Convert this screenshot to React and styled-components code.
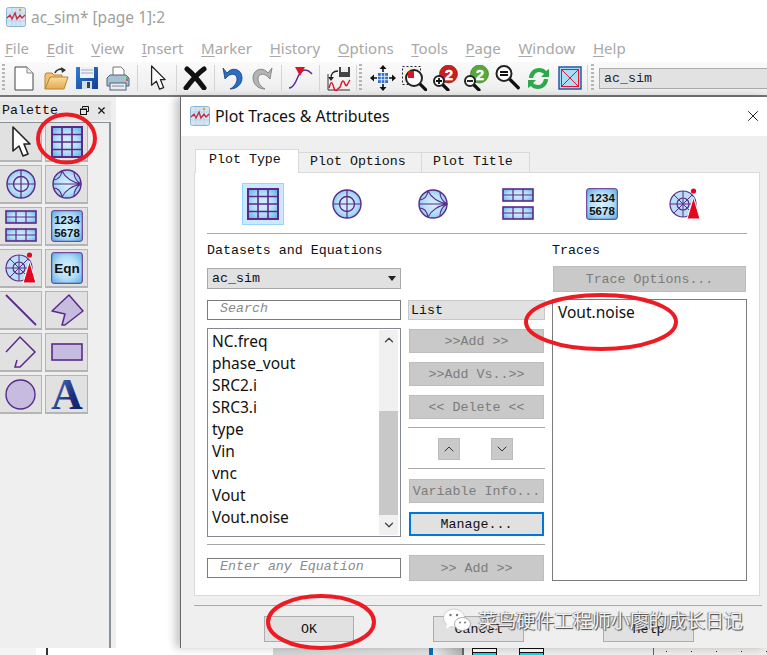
import React from 'react';
import styled, { createGlobalStyle } from 'styled-components';
import { ChevronUp, ChevronDown, X } from 'lucide-react';

const MONO = '"Liberation Mono", "DejaVu Sans Mono", monospace';
const SANS = '"Noto Sans", "Open Sans", sans-serif';
const PURPLE = '#5a2a8a';

const GlobalStyle = createGlobalStyle`
  html, body { margin: 0; padding: 0; background: #fff; }
  * { box-sizing: border-box; }
`;

const Page = styled.div`
  position: relative;
  width: 767px;
  height: 655px;
  overflow: hidden;
  display: flex;
  flex-direction: column;
  background: #fff;
  font-family: ${SANS};
`;

const TitleBar = styled.div`
  height: 40px;
  display: flex;
  align-items: center;
  gap: 5px;
  padding: 0 0 6px 6px;
  font-size: 15.5px;
  color: #a0a0a0;
`;

const MenuBar = styled.div`
  height: 22px;
  display: flex;
  align-items: center;
  gap: 17.7px;
  padding: 0 0 6px 5px;
  font-size: 15px;
  color: #a8a8a8;
  u { text-underline-offset: 2px; }
`;

const Toolbar = styled.div`
  height: 35px;
  display: flex;
  align-items: center;
  background: linear-gradient(#fafafa, #ececec);
  border-bottom: 2px solid #777;
  padding-bottom: 1px;
`;

const Slot = styled.div`
  display: flex;
  align-items: center;
  justify-content: center;
  flex: none;
  width: ${p => p.$w}px;
  margin-left: ${p => p.$ml}px;
`;

const Mirrored = styled.span`
  display: flex;
  transform: scaleX(-1);
`;

const ToolSep = styled.div`
  flex: none;
  width: 1px;
  height: 26px;
  background: #d4d4d4;
  margin-left: ${p => p.$ml}px;
`;

const Grip = styled.div`
  flex: none;
  width: 3px;
  height: 28px;
  margin-left: ${p => p.$ml}px;
  background: repeating-linear-gradient(#b5b5b5 0 2px, transparent 2px 4px);
`;

const ToolCombo = styled.div`
  flex: 1;
  height: 21px;
  margin-left: 5px;
  border: 1px solid #aaa;
  border-right: 0;
  background: #e2e2e2;
  font: 13.3px/20px ${MONO};
  color: #222;
  padding-left: 4px;
`;

const Workspace = styled.div`
  flex: 1;
  display: flex;
  min-height: 0;
`;

const Palette = styled.div`
  flex: none;
  width: 116px;
  margin-right: 64px;
  padding-top: 4px;
  background: #efefef;
  display: flex;
  flex-direction: column;
`;

const PaletteHead = styled.div`
  height: 19px;
  width: 111px;
  display: flex;
  align-items: center;
  background: #e6e6e6;
  padding-left: 2px;
  font: 13.3px ${MONO};
  color: #111;
  span { flex: 1; }
`;

const PaletteBody = styled.div`
  flex: 1;
  width: 111px;
  margin-top: 2px;
  border-top: 1px solid #8a9298;
  border-right: 2px solid #8a9298;
  display: grid;
  grid-template-columns: 42px 43px;
  grid-auto-rows: 39px;
  align-content: start;
  gap: 3px;
`;

const PaletteBtn = styled.div`
  display: flex;
  align-items: center;
  justify-content: center;
  background: #e1e1e1;
  border-style: solid;
  border-color: #b4b4b4;
  border-width: ${p => (p.$top ? '0 1px 2px 1px' : '1px 1px 2px 1px')};
  &:nth-child(odd) { border-left: 0; }
`;

const PaletteClose = styled(X)`
  margin: 0 4px 0 7px;
`;

const Dialog = styled.div`
  flex: 1;
  display: flex;
  flex-direction: column;
  min-width: 0;
  border-left: 1px solid #666;
  box-shadow: -5px 0 8px rgba(0, 0, 0, 0.22);
  background: #efefef;
  position: relative;
`;

const DialogTitle = styled.div`
  height: 39px;
  flex: none;
  display: flex;
  align-items: center;
  gap: 5px;
  padding: 0 5px 2px 9px;
  background: #fff;
  font-size: 15.9px;
  color: #111;
  span { flex: 1; }
`;

const Tabs = styled.div`
  display: flex;
  align-items: flex-end;
  margin: 13px 0 0 14px;
  height: 23px;
`;

const Tab = styled.div`
  height: ${p => (p.$active ? 24 : 20)}px;
  width: ${p => p.$w}px;
  margin-bottom: ${p => (p.$active ? -1 : 0)}px;
  padding-left: ${p => (p.$active ? 13 : 11)}px;
  background: ${p => (p.$active ? '#fff' : '#f0f0f0')};
  border: 1px solid #d9d9d9;
  border-left-width: ${p => (p.$active ? 1 : 0)}px;
  border-bottom: 0;
  font: 13.3px/${p => (p.$active ? 20 : 18)}px ${MONO};
  color: #111;
  position: relative;
  z-index: ${p => (p.$active ? 1 : 0)};
`;

const Panel = styled.div`
  width: 566px;
  height: 424px;
  margin-left: 13px;
  background: #fff;
  border: 1px solid #d9d9d9;
  padding: 0 12px;
`;

const PlotRow = styled.div`
  height: 61px;
  display: flex;
  align-items: center;
  border-bottom: 1px solid #a8a8a8;
  padding: 2px 0 0 35px;
`;

const PlotSlot = styled.div`
  flex: none;
  width: 42px;
  height: 42px;
  margin-right: ${p => p.$mr}px;
  display: flex;
  align-items: center;
  justify-content: center;
  border: 1px solid ${p => (p.$selected ? '#99d1ff' : 'transparent')};
  background: ${p => (p.$selected ? '#cce8ff' : 'transparent')};
`;

const PanelBody = styled.div`
  display: flex;
  gap: 7px;
`;

const LeftBlock = styled.div`
  width: 338px;
  flex: none;
`;

const RightBlock = styled.div`
  width: 195px;
  flex: none;
`;

const Label = styled.div`
  height: 15px;
  margin-top: 10px;
  font: 13.3px/13px ${MONO};
  color: #111;
`;

const SelectBox = styled.div`
  width: 194px;
  height: 21px;
  margin-top: 9px;
  display: flex;
  align-items: center;
  justify-content: space-between;
  padding: 0 4px;
  background: #e1e1e1;
  border: 1px solid #a8a8a8;
  font: 13.3px ${MONO};
  color: #111;
  i {
    width: 0;
    height: 0;
    border: 4px solid transparent;
    border-top: 5px solid #222;
    border-bottom: 0;
  }
`;

const Columns = styled.div`
  display: flex;
  gap: 7px;
  margin-top: 11px;
`;

const LeftCol = styled.div`
  width: 194px;
  flex: none;
  display: flex;
  flex-direction: column;
  gap: 8px;
`;

const MidCol = styled.div`
  width: 137px;
  flex: none;
  display: flex;
  flex-direction: column;
`;

const InputBox = styled.div`
  height: 20px;
  border: 1px solid #7a7a7a;
  background: #fff;
  padding-left: ${p => p.$pad}px;
  font: italic 13.3px/16px ${MONO};
  color: #8a8a8a;
`;

const ListBox = styled.div`
  height: 209px;
  display: flex;
  justify-content: space-between;
  border: 1px solid #828790;
  background: #fff;
  padding-right: 2px;
`;

const ListItems = styled.div`
  padding: 1px 0 0 4px;
`;

const ListItem = styled.div`
  height: 22px;
  font-size: 15.5px;
  line-height: 22px;
  color: #111;
`;

const ScrollBar = styled.div`
  width: 19px;
  margin: 1px 0;
  background: #f0f0f0;
  display: flex;
  flex-direction: column;
  color: #444;
  span {
    height: 20px;
    display: flex;
    align-items: center;
    justify-content: center;
    flex: none;
  }
  em { flex: 1; }
  b { height: 104px; flex: none; background: #c8c8c8; }
`;

const ListHead = styled.div`
  height: 20px;
  background: #e1e1e1;
  border: 1px solid #c8c8c8;
  padding-left: 2px;
  font: 13.3px/19px ${MONO};
  color: #111;
`;

const Button = styled.div`
  flex: none;
  height: ${p => p.$h || 24}px;
  width: ${p => p.$w || 135}px;
  margin: ${p => p.$m || '0 1px'};
  display: flex;
  align-items: center;
  justify-content: center;
  background: ${p => (p.$off ? '#c9c9c9' : '#e1e1e1')};
  border: ${p => (p.$focus ? '2px solid #0078d7' : `1px solid ${p.$off ? '#bdbdbd' : '#adadad'}`)};
  font: 13.3px ${MONO};
  color: ${p => (p.$off ? '#7c7c7c' : '#111')};
  white-space: pre;
`;

const Rule = styled.div`
  height: 1px;
  background: #a8a8a8;
  margin: ${p => p.$m};
`;

const ArrowRow = styled.div`
  display: flex;
  gap: 31px;
  padding-left: 30px;
`;

const EquationRow = styled.div`
  display: flex;
  align-items: center;
  gap: 7px;
  margin-top: 10px;
`;

const EquationCell = styled.div`
  width: 194px;
  flex: none;
`;

const TracesList = styled.div`
  height: 282px;
  margin-top: 7px;
  border: 1px solid #7a7a7a;
  background: #fff;
  padding-left: 5px;
  font-size: 15.5px;
  line-height: 24px;
  color: #111;
`;

const Footer = styled.div`
  margin: 9px 5px 0 13px;
  border-top: 1px solid #a8a8a8;
  padding: 10px 0 0 70px;
  display: flex;
  gap: 79px;
`;

const BottomStrip = styled.div`
  height: 7px;
  flex: none;
  display: flex;
  background: #fff;
`;

const StripPiece = styled.div`
  flex: none;
  width: ${p => p.$w}px;
  margin-left: ${p => p.$ml || 0}px;
  background: ${p => p.$bg};
`;

const StripDock = styled.div`
  flex: none;
  width: 191px;
  display: flex;
  background: #eee;
  border-left: 2px solid #666;
`;

const StripGlyph = styled.div`
  flex: none;
  width: 25px;
  margin-left: ${p => p.$ml}px;
  border: 1px solid #111;
  border-bottom: 0;
  background: linear-gradient(#fff 0 3px, #111 3px 4px, #18d8e0 4px);
`;

const StripEnd = styled.div`
  flex: 1;
  border-left: 1px solid #666;
  background-color: #f0eceb;
  background-image: radial-gradient(#222 0.6px, transparent 0.8px);
  background-size: 25px 7px;
`;

const Overlay = styled.svg`
  position: absolute;
  left: 0;
  top: 0;
  pointer-events: none;
`;

const Watermark = styled.div`
  position: absolute;
  right: 24px;
  top: 607px;
  display: flex;
  align-items: center;
  gap: 8px;
  font: 18.9px/26px "Noto Sans CJK SC", sans-serif;
  color: rgba(255, 255, 255, 0.92);
  text-shadow: 1px 1px 1px #444, -1px 0 1px #777;
  white-space: nowrap;
`;

const blueFill = 'url(#blueGlow)';

const Defs = () => (
  <defs>
    <radialGradient id="blueGlow" cx="50%" cy="50%" r="65%">
      <stop offset="0" stopColor="#d8f0fd" />
      <stop offset="0.55" stopColor="#b4def7" />
      <stop offset="1" stopColor="#62b4e8" />
    </radialGradient>
    <linearGradient id="letterBlue" x1="0" y1="0" x2="1" y2="1">
      <stop offset="0" stopColor="#5d86c4" />
      <stop offset="0.6" stopColor="#1b2f7e" />
      <stop offset="1" stopColor="#0d1a5c" />
    </linearGradient>
    <linearGradient id="folderTan" x1="0" y1="0" x2="0" y2="1">
      <stop offset="0" stopColor="#fbdc9c" />
      <stop offset="1" stopColor="#e6a94f" />
    </linearGradient>
    <linearGradient id="floppyBlue" x1="0" y1="0" x2="1" y2="1">
      <stop offset="0" stopColor="#2f7fd0" />
      <stop offset="1" stopColor="#123f92" />
    </linearGradient>
  </defs>
);

const AppIcon = ({ size = 20 }) => (
  <svg width={size} height={size} viewBox="0 0 20 20">
    <rect x="0.5" y="0.5" width="19" height="19" rx="2" fill="#d4e6f5" stroke="#8fb4d2" />
    <path d="M1 6h18M1 10h18M1 14h18M6 1v18M10 1v18M14 1v18" stroke="#a9cbe6" strokeWidth="0.6" />
    <path d="M1 11l3-3 2 4 3-6 2 6 3-4 2 3 3-3" fill="none" stroke="#c8283a" strokeWidth="1.3" />
    <circle cx="14" cy="3" r="1.3" fill="#f0a020" />
  </svg>
);

const GridIcon = () => (
  <svg width="32" height="32" viewBox="0 0 32 32">
    <rect x="1" y="1" width="30" height="30" fill={blueFill} stroke={PURPLE} strokeWidth="2" />
    <path d="M11 1v30M21 1v30M1 8.5h30M1 16h30M1 23.5h30" stroke={PURPLE} strokeWidth="1.6" />
  </svg>
);

const PolarIcon = () => (
  <svg width="30" height="30" viewBox="0 0 30 30">
    <circle cx="15" cy="15" r="14" fill={blueFill} stroke={PURPLE} strokeWidth="1.4" />
    <circle cx="15" cy="15" r="7.5" fill="#cfeafb" stroke={PURPLE} strokeWidth="1.4" />
    <path d="M1 15h28M15 1v28" stroke={PURPLE} strokeWidth="1.2" />
  </svg>
);

const SmithIcon = () => (
  <svg width="30" height="30" viewBox="0 0 30 30">
    <circle cx="15" cy="15" r="14" fill={blueFill} stroke={PURPLE} strokeWidth="1.4" />
    <path d="M1 15h28M10 2C13 8 20 13 29 15C20 17 13 22 10 28M22 3C22 8 24 12 29 15C24 18 22 22 22 27M1 11C6 11 9 8 10 2M1 19C6 19 9 22 10 28" fill="none" stroke={PURPLE} strokeWidth="1.1" />
  </svg>
);

const StackIcon = () => (
  <svg width="32" height="32" viewBox="0 0 32 32">
    {[1, 19].map(y => (
      <g key={y}>
        <rect x="1" y={y} width="30" height="12" fill={blueFill} stroke={PURPLE} strokeWidth="1.6" />
        <path d={`M11 ${y}v12M21 ${y}v12M1 ${y + 6}h30`} stroke={PURPLE} strokeWidth="1.2" />
      </g>
    ))}
  </svg>
);

const NumbersIcon = () => (
  <svg width="32" height="32" viewBox="0 0 32 32">
    <rect x="0.7" y="0.7" width="30.6" height="30.6" rx="2" fill={blueFill} stroke={PURPLE} strokeWidth="1" />
    <text x="16" y="14" textAnchor="middle" fontFamily="Liberation Sans" fontWeight="700" fontSize="11.5" fill="#111">1234</text>
    <text x="16" y="27" textAnchor="middle" fontFamily="Liberation Sans" fontWeight="700" fontSize="11.5" fill="#111">5678</text>
  </svg>
);

const AntennaIcon = () => (
  <svg width="32" height="34" viewBox="0 0 32 34">
    <circle cx="14" cy="17" r="13" fill="#b9dff6" stroke={PURPLE} strokeWidth="1.2" />
    <circle cx="14" cy="17" r="6" fill="none" stroke={PURPLE} strokeWidth="1.2" />
    <path d="M1 17h26M14 4v26M5 8l18 18M23 8L5 26" stroke={PURPLE} strokeWidth="1" />
    <path d="M18 32L24.5 10 31 32z" fill="#e3061e" stroke="#fff" strokeWidth="1" />
    <circle cx="24.5" cy="4" r="2.6" fill="#e3061e" />
  </svg>
);

const EqnIcon = () => (
  <svg width="32" height="32" viewBox="0 0 32 32">
    <rect x="0.7" y="0.7" width="30.6" height="30.6" rx="2" fill={blueFill} stroke={PURPLE} strokeWidth="1" />
    <text x="16" y="21" textAnchor="middle" fontFamily="Liberation Sans" fontWeight="700" fontSize="13.5" fill="#111">Eqn</text>
  </svg>
);

const LineIcon = () => (
  <svg width="34" height="34" viewBox="0 0 34 34">
    <path d="M2 2l30 30" stroke={PURPLE} strokeWidth="1.8" />
  </svg>
);

const PolygonIcon = () => (
  <svg width="34" height="34" viewBox="0 0 34 34">
    <path d="M2 18L19 2l14 16-18 14h-3l3-11z" fill="#c5bce0" stroke={PURPLE} strokeWidth="1.5" strokeLinejoin="round" />
  </svg>
);

const PolylineIcon = () => (
  <svg width="32" height="34" viewBox="0 0 32 34">
    <path d="M1 17L15 2l15 15-15 15H10l2-7" fill="none" stroke={PURPLE} strokeWidth="1.5" />
  </svg>
);

const RectIcon = () => (
  <svg width="32" height="18" viewBox="0 0 32 18">
    <rect x="1" y="1" width="30" height="16" fill="#c5bce0" stroke={PURPLE} strokeWidth="1.6" />
  </svg>
);

const CircleIcon = () => (
  <svg width="31" height="31" viewBox="0 0 31 31">
    <circle cx="15.5" cy="15.5" r="14.5" fill="#c5bce0" stroke={PURPLE} strokeWidth="1.4" />
  </svg>
);

const LetterIcon = () => (
  <svg width="36" height="36" viewBox="0 0 36 36">
    <text x="18" y="33" textAnchor="middle" fontFamily="Liberation Serif" fontWeight="700" fontSize="44" fill="url(#letterBlue)">A</text>
  </svg>
);

const CursorIcon = ({ w = 20, h = 32 }) => (
  <svg width={w} height={h} viewBox="0 0 20 32">
    <path d="M2 1v24l6-5 4 10 5-2-4-10h6z" fill="#fff" stroke="#222" strokeWidth="1.6" strokeLinejoin="round" />
  </svg>
);

const NewDoc = () => (
  <svg width="20" height="25" viewBox="0 0 20 25">
    <path d="M1 1h12l6 6v17H1z" fill="#fff" stroke="#444" />
    <path d="M13 1v6h6" fill="#eee" stroke="#888" />
  </svg>
);

const OpenFolder = () => (
  <svg width="25" height="25" viewBox="0 0 25 25">
    <path d="M1 23V9l1-2h6l2 2h8v3H6z" fill="#f3c374" stroke="#b98436" />
    <path d="M1 23l5-12h18l-4 12z" fill="url(#folderTan)" stroke="#b98436" />
    <path d="M11 7c1-3 5-5 8-3" fill="none" stroke="#333" strokeWidth="1.6" />
    <path d="M17 1l5 3-4 3z" fill="#333" />
  </svg>
);

const SaveIcon = () => (
  <svg width="24" height="24" viewBox="0 0 24 24">
    <path d="M1 2a1 1 0 011-1h20a1 1 0 011 1v21H1z" fill="url(#floppyBlue)" />
    <rect x="5" y="1" width="14" height="11" fill="#eef3f8" />
    <path d="M6 4h12M6 7h12" stroke="#9ab" />
    <rect x="7" y="15" width="10" height="8" fill="#d7dde4" />
    <rect x="12" y="16" width="3" height="6" fill="#345" />
  </svg>
);

const PrinterIcon = () => (
  <svg width="24" height="25" viewBox="0 0 24 25">
    <path d="M7 1h8l3 3v8H7z" fill="#fff" stroke="#777" />
    <path d="M1 12l3-3h16l3 3v8H1z" fill="#a9bfd2" stroke="#4f6478" />
    <rect x="4" y="17" width="16" height="7" fill="#e7edf2" stroke="#4f6478" />
    <path d="M20 12h2" stroke="#2c2" strokeWidth="1.5" />
    <path d="M20 14h2" stroke="#e33" strokeWidth="1.5" />
    <path d="M6 20h12" stroke="#888" />
  </svg>
);

const BlackCross = () => (
  <svg width="24" height="24" viewBox="0 0 24 24">
    <path d="M4 3c6 5 11 11 17 19M21 3C14 8 9 14 3 22" stroke="#111" strokeWidth="5" strokeLinecap="round" fill="none" />
  </svg>
);

const UndoIcon = ({ color = '#2a6fc4', edge = '#0d3a8a' }) => (
  <svg width="21" height="25" viewBox="0 0 21 25">
    <path d="M1 2l2 11 3-3c4-3 9-2 9 3 0 4-3 8-7 10 7 0 12-5 12-11C20 4 12 1 7 5L5 7z" fill={color} stroke={edge} strokeWidth="0.8" strokeLinejoin="round" />
  </svg>
);

const TraceIcon = () => (
  <svg width="25" height="24" viewBox="0 0 25 24">
    <path d="M1 22c4 0 6-4 8-9s4-9 8-9 5 2 7 4" fill="none" stroke="#5a2a9a" strokeWidth="1.5" />
    <path d="M7 1h10l-5 9z" fill="#dc1428" />
  </svg>
);

const ExportIcon = () => (
  <svg width="24" height="25" viewBox="0 0 24 25">
    <rect x="12" y="1" width="11" height="10" fill="#444" />
    <rect x="14" y="1" width="7" height="5" fill="#eee" />
    <path d="M11 5C6 5 4 8 4 12" fill="none" stroke="#222" strokeWidth="1.3" />
    <path d="M1 11h6l-3 4z" fill="#222" />
    <path d="M1 8v16h22" fill="none" stroke="#333" />
    <path d="M2 22c2-7 3-7 5 0s3 0 5 0 2-7 4-7 2 7 4 4 2-4 3-5" fill="none" stroke="#dc1428" strokeWidth="1.4" />
  </svg>
);

const MoveIcon = () => (
  <svg width="26" height="26" viewBox="0 0 26 26">
    <rect x="8" y="8" width="10" height="10" fill="#2f74cc" />
    <path d="M11.3 8v10M14.7 8v10M8 11.3h10M8 14.7h10" stroke="#fff" strokeWidth="0.8" />
    <path d="M13 3v4M13 19v4M3 13h4M19 13h4" stroke="#111" strokeWidth="1.6" />
    <path d="M13 0l-3.5 4h7zM13 26l-3.5-4h7zM0 13l4-3.5v7zM26 13l-4-3.5v7z" fill="#111" />
  </svg>
);

const Lens = ({ cx, cy, r, reach = 7 }) => (
  <>
    <path d={`M${cx + r * 0.7} ${cy + r * 0.7}l${reach} ${reach}`} stroke="#111" strokeWidth="3.2" strokeLinecap="round" />
    <circle cx={cx} cy={cy} r={r} fill="#fff" stroke="#222" strokeWidth="2" />
  </>
);

const ZoomAreaIcon = () => (
  <svg width="25" height="25" viewBox="0 0 25 25">
    <rect x="0.5" y="0.5" width="18" height="18" fill="#f3f3d8" stroke="#225" strokeDasharray="2 2" />
    <Lens cx={12} cy={12} r={8} />
    <path d="M12 12V5H6v7z" fill="#dc1428" />
  </svg>
);

const ZoomTwoIcon = ({ mark, color, edge }) => (
  <svg width="25" height="26" viewBox="0 0 25 26">
    <circle cx="15.5" cy="9" r="9" fill={color} stroke={edge} strokeWidth="0.6" />
    <text x="16" y="14.5" textAnchor="middle" fontFamily="Liberation Sans" fontWeight="700" fontSize="15" fill="#fff" stroke="#fff" strokeWidth="0.4">2</text>
    <Lens cx={6} cy={16} r={5} reach={5.5} />
    <path d={mark === '+' ? 'M3 16h6M6 13v6' : 'M3 16h6'} stroke="#111" strokeWidth="1.8" />
  </svg>
);

const ZoomEqualIcon = () => (
  <svg width="25" height="26" viewBox="0 0 25 26">
    <Lens cx={9} cy={8.5} r={7.5} reach={9} />
    <path d="M5 7h8M5 10h8" stroke="#111" strokeWidth="1.8" />
  </svg>
);

const RefreshIcon = () => (
  <svg width="25" height="25" viewBox="0 0 25 25">
    <path d="M3 12C3 6 8 2 13 2c3 0 6 1 7 3l3-2v8h-8l3-3c-1-1-3-2-5-2-3 0-5 2-6 6z" fill="#2da84a" />
    <path d="M22 13c0 6-5 10-10 10-3 0-6-1-7-3l-3 2v-8h8l-3 3c1 1 3 2 5 2 3 0 5-2 6-6z" fill="#2da84a" />
  </svg>
);

const BoxCross = () => (
  <svg width="24" height="24" viewBox="0 0 24 24">
    <rect x="1" y="1" width="22" height="22" fill="#a9dcf5" stroke="#1b4f9c" strokeWidth="1.4" />
    <rect x="3.5" y="3.5" width="17" height="17" fill="none" stroke="#e3102e" />
    <path d="M3.5 3.5l17 17M20.5 3.5l-17 17" stroke="#e3102e" />
  </svg>
);

const WeChatMark = () => (
  <svg width="28" height="25" viewBox="0 0 28 25">
    <ellipse cx="11" cy="10" rx="10.5" ry="9" fill="#fff" stroke="#aaa" strokeWidth="0.5" />
    <path d="M4 16l-1 5 5-3z" fill="#fff" />
    <ellipse cx="19.5" cy="16" rx="8" ry="6.5" fill="#fff" stroke="#999" strokeWidth="0.8" />
    <circle cx="7.5" cy="7" r="1.2" fill="#777" />
    <circle cx="14" cy="7" r="1.2" fill="#777" />
    <circle cx="17" cy="14.5" r="1" fill="#777" />
    <circle cx="22" cy="14.5" r="1" fill="#777" />
  </svg>
);

const DockIcon = () => (
  <svg width="9" height="9" viewBox="0 0 9 9">
    <path d="M2.5 2V.5h6v5H7" fill="none" stroke="#111" />
    <rect x="0.5" y="3" width="6" height="5.5" fill="none" stroke="#111" />
    <path d="M0.5 3.5h6" stroke="#111" />
  </svg>
);

const MENUS = ['File', 'Edit', 'View', 'Insert', 'Marker', 'History', 'Options', 'Tools', 'Page', 'Window', 'Help'];

const PALETTE = [
  <CursorIcon />, <GridIcon />, <PolarIcon />, <SmithIcon />, <StackIcon />, <NumbersIcon />,
  <AntennaIcon />, <EqnIcon />, <LineIcon />, <PolygonIcon />, <PolylineIcon />, <RectIcon />,
  <CircleIcon />, <LetterIcon />,
];

const PLOT_TYPES = [
  { icon: <GridIcon />, mr: 42, selected: true },
  { icon: <PolarIcon />, mr: 44 },
  { icon: <SmithIcon />, mr: 43 },
  { icon: <StackIcon />, mr: 42 },
  { icon: <NumbersIcon />, mr: 41 },
  { icon: <AntennaIcon />, mr: 0 },
];

const VARIABLES = ['NC.freq', 'phase_vout', 'SRC2.i', 'SRC3.i', 'type', 'Vin', 'vnc', 'Vout', 'Vout.noise'];

export default function App() {
  return (
    <Page>
      <GlobalStyle />
      <TitleBar>
        <AppIcon />
        ac_sim* [page 1]:2
      </TitleBar>
      <MenuBar>
        {MENUS.map(name => (
          <span key={name}><u>{name[0]}</u>{name.slice(1)}</span>
        ))}
      </MenuBar>
      <Toolbar>
        <Grip $ml={2} />
        <Slot $w={20} $ml={9}><NewDoc /></Slot>
        <Slot $w={25} $ml={10}><OpenFolder /></Slot>
        <Slot $w={24} $ml={6}><SaveIcon /></Slot>
        <Slot $w={24} $ml={7}><PrinterIcon /></Slot>
        <ToolSep $ml={7} />
        <Slot $w={17} $ml={11}><CursorIcon w={16} h={26} /></Slot>
        <ToolSep $ml={10} />
        <Slot $w={24} $ml={6}><BlackCross /></Slot>
        <ToolSep $ml={7} />
        <Slot $w={21} $ml={7}><UndoIcon /></Slot>
        <Slot $w={21} $ml={9}>
          <Mirrored><UndoIcon color="#b4b4b4" edge="#777" /></Mirrored>
        </Slot>
        <ToolSep $ml={8} />
        <Slot $w={25} $ml={6}><TraceIcon /></Slot>
        <ToolSep $ml={6} />
        <Slot $w={24} $ml={7}><ExportIcon /></Slot>
        <ToolSep $ml={5} />
        <Grip $ml={2} />
        <Slot $w={26} $ml={8}><MoveIcon /></Slot>
        <Slot $w={25} $ml={6}><ZoomAreaIcon /></Slot>
        <Slot $w={25} $ml={6}><ZoomTwoIcon mark="+" color="#c8201f" edge="#7c0f0f" /></Slot>
        <Slot $w={25} $ml={6}><ZoomTwoIcon mark="-" color="#58a83a" edge="#2d6a1c" /></Slot>
        <Slot $w={25} $ml={6}><ZoomEqualIcon /></Slot>
        <Slot $w={25} $ml={6}><RefreshIcon /></Slot>
        <Slot $w={24} $ml={7}><BoxCross /></Slot>
        <ToolSep $ml={5} />
        <Grip $ml={3} />
        <ToolCombo>ac_sim</ToolCombo>
      </Toolbar>

      <Workspace>
        <Palette>
          <PaletteHead>
            <span>Palette</span>
            <DockIcon />
            <PaletteClose size={11} strokeWidth={2.4} color="#111" />
          </PaletteHead>
          <PaletteBody>
            {PALETTE.map((icon, i) => (
              <PaletteBtn key={i} $top={i < 2}>{icon}</PaletteBtn>
            ))}
          </PaletteBody>
        </Palette>

        <Dialog>
          <DialogTitle>
            <AppIcon />
            <span>Plot Traces &amp; Attributes</span>
            <X size={18} strokeWidth={1.2} color="#111" />
          </DialogTitle>
          <Tabs>
            <Tab $active $w={104}>Plot Type</Tab>
            <Tab $w={123}>Plot Options</Tab>
            <Tab $w={108}>Plot Title</Tab>
          </Tabs>
          <Panel>
            <PlotRow>
              {PLOT_TYPES.map((t, i) => (
                <PlotSlot key={i} $mr={t.mr} $selected={t.selected}>{t.icon}</PlotSlot>
              ))}
            </PlotRow>
            <PanelBody>
              <LeftBlock>
                <Label>Datasets and Equations</Label>
                <SelectBox>ac_sim<i /></SelectBox>
                <Columns>
                  <LeftCol>
                    <InputBox $pad={12}>Search</InputBox>
                    <ListBox>
                      <ListItems>
                        {VARIABLES.map(v => <ListItem key={v}>{v}</ListItem>)}
                      </ListItems>
                      <ScrollBar>
                        <span><ChevronUp size={14} strokeWidth={2.2} /></span>
                        <em />
                        <b />
                        <span><ChevronDown size={14} strokeWidth={2.2} /></span>
                      </ScrollBar>
                    </ListBox>
                  </LeftCol>
                  <MidCol>
                    <ListHead>List</ListHead>
                    <Button $off $m="9px 1px 0">{'>>Add >>'}</Button>
                    <Button $off $m="9px 1px 0">{'>>Add Vs..>>'}</Button>
                    <Button $off $m="9px 1px 0">{'<< Delete <<'}</Button>
                    <Rule $m="8px 0 10px" />
                    <ArrowRow>
                      <Button $off $w={22} $h={22} $m="0"><ChevronUp size={16} strokeWidth={1.5} color="#333" /></Button>
                      <Button $off $w={22} $h={22} $m="0"><ChevronDown size={16} strokeWidth={1.5} color="#333" /></Button>
                    </ArrowRow>
                    <Rule $m="8px 0 10px" />
                    <Button $off>Variable Info...</Button>
                    <Button $focus $m="9px 1px 0">Manage...</Button>
                  </MidCol>
                </Columns>
                <Rule $m="7px 0 0" />
                <EquationRow>
                  <EquationCell>
                    <InputBox $pad={12}>Enter any Equation</InputBox>
                  </EquationCell>
                  <Button $off $h={26}>{'>> Add >>'}</Button>
                </EquationRow>
              </LeftBlock>
              <RightBlock>
                <Label>Traces</Label>
                <Button $off $w={193} $h={26} $m="7px 1px 0">Trace Options...</Button>
                <TracesList>Vout.noise</TracesList>
              </RightBlock>
            </PanelBody>
          </Panel>
          <Footer>
            <Button $w={90} $h={26} $m="0">OK</Button>
            <Button $w={91} $h={26} $m="0">Cancel</Button>
            <Button $w={91} $h={26} $m="0">Help</Button>
          </Footer>
        </Dialog>
      </Workspace>

      <BottomStrip>
        <StripPiece $w={36} $bg="#f4f4f4" />
        <StripPiece $w={2} $ml={10} $bg="#333" />
        <StripPiece $w={225} $bg="#fff" />
        <StripPiece $w={156} $bg="linear-gradient(90deg, #d4d4d4, #e2e2e2)" />
        <StripPiece $w={4} $bg="#0b6fb8" />
        <StripPiece $w={29} $bg="linear-gradient(90deg, #eee, #b5b5b5)" />
        <StripDock>
          <StripGlyph $ml={8} />
          <StripGlyph $ml={22} />
        </StripDock>
        <StripEnd />
      </BottomStrip>

      <Watermark>
        <WeChatMark />
        菜鸟硬件工程师小廖的成长日记
      </Watermark>

      <Overlay width="767" height="655" viewBox="0 0 767 655">
        <Defs />
        <ellipse cx="66.5" cy="138.5" rx="28.5" ry="24" fill="none" stroke="#ed1c24" strokeWidth="4" />
        <ellipse cx="601" cy="322" rx="75" ry="27" fill="none" stroke="#ed1c24" strokeWidth="4" />
        <ellipse cx="321" cy="622" rx="53" ry="26" fill="none" stroke="#ed1c24" strokeWidth="4" />
      </Overlay>
    </Page>
  );
}
